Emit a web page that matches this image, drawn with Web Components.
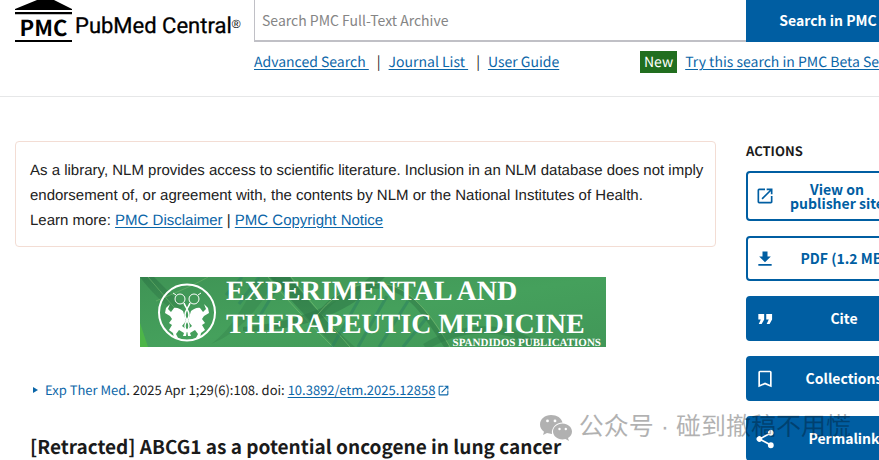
<!DOCTYPE html>
<html lang="en">
<head>
<meta charset="utf-8">
<title>PMC</title>
<style>
  html, body { margin: 0; overflow: hidden; }
  body {
    min-height: 100vh;
    position: relative;
    background: #fff;
    color: #1b1b1b;
    font: 14px/20px "Noto Sans CJK SC", "Noto Sans", sans-serif;
    text-rendering: geometricPrecision;
  }
</style>
</head>
<body>
<pmc-page>
  <pmc-header slot="header"></pmc-header>
  <pmc-disclaimer></pmc-disclaimer>
  <pmc-article>[Retracted] ABCG1 as a potential oncogene in lung cancer</pmc-article>
  <pmc-actions slot="aside">
    <pmc-action icon="open" multiline>View on<br>publisher site</pmc-action>
    <pmc-action icon="download">PDF (1.2 MB)</pmc-action>
    <pmc-action icon="quote" filled>Cite</pmc-action>
    <pmc-action icon="bookmark" filled>Collections</pmc-action>
    <pmc-action icon="share" filled>Permalink</pmc-action>
  </pmc-actions>
</pmc-page>
<page-watermark>公众号 · 碰到撤稿不用慌</page-watermark>

<script>
const ICONS = {
  open: '<path d="M19 19H5V5h7V3H5a2 2 0 0 0-2 2v14a2 2 0 0 0 2 2h14c1.100 0 2-.900 2-2v-7h-2v7zM14 3v2h3.590l-9.830 9.830 1.410 1.410L19 6.410V10h2V3h-7z"/>',
  download: '<path d="M19 9h-4V3H9v6H5l7 7 7-7zM4 18v2h16v-2H4z"/>',
  quote: '<path d="M4 6h7v6.500L8 18H4.500l2.500-5.500H4zM13.500 6h7v6.500l-3 5.500H14l2.500-5.500h-3z"/>',
  bookmark: '<path d="M18 2H6a2 2 0 0 0-2 2v18l8-3.500 8 3.500V4a2 2 0 0 0-2-2zm0 17-6-2.700L6 19V4h12v15z"/>',
  share: '<path d="M19 16c-.900 0-1.700.300-2.300.800L8.600 12.700a3.300 3.300 0 0 0 0-1.400l8-4.200A3.500 3.500 0 1 0 15.500 4.500c0 .300 0 .600.100.900L7.700 9.600a3.400 3.400 0 1 0 0 4.800l7.900 4.200c-.100.300-.100.600-.100.900a3.500 3.500 0 1 0 3.500-3.500z"/>'
};

class PmcPage extends HTMLElement {
  constructor() {
    super();
    this.attachShadow({ mode: "open" }).innerHTML = `
      <style>
        /* the shell runs a little wider than the viewport and is cut on the right */
        :host { display: block; width: calc(100% + 46px); }
        .columns {
          display: grid;
          grid-template-columns: minmax(0, 1fr) 164px;
          gap: 30px;
          padding: 44px 15px 0;
        }
      </style>
      <slot name="header"></slot>
      <div class="columns">
        <main><slot></slot></main>
        <aside><slot name="aside"></slot></aside>
      </div>`;
  }
}

class PmcLogo extends HTMLElement {
  constructor() {
    super();
    this.attachShadow({ mode: "open" }).innerHTML = `
      <style>
        :host { display: block; }
        a { display: flex; gap: 3px; color: #000; text-decoration: none; }
        .mark { width: 57px; text-align: center; font-size: 22px; font-weight: 700; line-height: 25px; }
        svg { display: block; }
        .bar { height: 2px; background: #000; }
        .name { font: 400 22px/24px Roboto, sans-serif; padding-top: 15px; white-space: nowrap; }
        .name span { -webkit-text-stroke: .3px #000; }
        sup { font: 12px/1 "Liberation Sans", sans-serif; line-height: 0; vertical-align: 5px; }
      </style>
      <a href="#">
        <div class="mark">
          <svg width="57" height="15" viewBox="0 0 57 15"><path d="M22 0h17L57 9v1H0V9zM0 12h57v2.200H0z"/></svg>
          PMC
          <div class="bar"></div>
        </div>
        <div class="name"><span>PubMed Central</span><sup>®</sup></div>
      </a>`;
  }
}

class PmcHeader extends HTMLElement {
  constructor() {
    super();
    this.attachShadow({ mode: "open" }).innerHTML = `
      <style>
        :host { display: block; border-bottom: 1px solid #e6e7e8; }
        .bar {
          display: grid;
          grid-template-columns: 224px minmax(0, 1fr);
          gap: 15px;
          padding: 0 15px 23px;
        }
        form { display: flex; height: 42px; }
        input {
          flex: 1;
          min-width: 0;
          box-sizing: border-box;
          border: solid #c0c0c6;
          border-width: 0 0 2px 1px;
          padding: 0 7px;
          font: inherit;
          outline: 0;
        }
        input::placeholder { color: #858585; opacity: 1; }
        form button {
          width: 164px;
          border: 0;
          padding: 0 0 2px;
          background: #005ea2;
          color: #fff;
          font: inherit;
          font-weight: 700;
        }
        .links { display: flex; justify-content: space-between; padding-top: 9px; line-height: 22px; white-space: nowrap; }
        a { color: #0b66a8; text-underline-offset: 2px; text-decoration-thickness: 1px; }
        nav { display: flex; }
        nav a { white-space: pre; }
        .sep { padding: 0 8px; }
        .beta { display: flex; gap: 8px; width: 270px; }
        .new { background: #216e1f; color: #fff; padding: 0 4px; }
      </style>
      <header class="bar">
        <pmc-logo></pmc-logo>
        <div>
          <form role="search">
            <input type="search" placeholder="Search PMC Full-Text Archive" aria-label="Search PMC Full-Text Archive">
            <button type="button">Search in PMC</button>
          </form>
          <div class="links">
            <nav><a href="#">Advanced Search </a><span class="sep">|</span><a href="#">Journal List </a><span class="sep">|</span><a href="#">User Guide</a></nav>
            <div class="beta"><span class="new">New</span><a href="#">Try this search in PMC Beta Search</a></div>
          </div>
        </div>
      </header>`;
  }
}

class PmcDisclaimer extends HTMLElement {
  constructor() {
    super();
    this.attachShadow({ mode: "open" }).innerHTML = `
      <style>
        :host {
          display: block;
          border: 1px solid #f3ddd4;
          border-radius: 4px;
          padding: 16px 0 13px 14px;
          font: 15px/25px "Liberation Sans", Arial, sans-serif;
          color: #212121;
        }
        a { color: #0b66a8; text-underline-offset: 2px; }
      </style>
      As a library, NLM provides access to scientific literature. Inclusion in an NLM database does not imply endorsement of, or agreement with, the contents by NLM or the National Institutes of Health.<br>
      Learn more: <a href="#">PMC Disclaimer</a> | <a href="#">PMC Copyright Notice</a>`;
  }
}

class JournalBanner extends HTMLElement {
  constructor() {
    super();
    this.attachShadow({ mode: "open" }).innerHTML = `
      <style>
        :host { display: block; }
        svg { display: block; margin: 0 auto; }
        text { fill: #fff; font-family: "Liberation Serif", "Times New Roman", serif; font-weight: 700; }
        .title { font-size: 28px; }
        .publisher { font-size: 11px; }
      </style>
      <svg width="466" height="70" viewBox="0 0 466 70" role="img">
        <defs>
          <linearGradient id="base" x1="0" y1="0" x2="1" y2="1">
            <stop offset="0" stop-color="#3f9455"/><stop offset=".5" stop-color="#45a05c"/><stop offset="1" stop-color="#419758"/>
          </linearGradient>
          <linearGradient id="strand" x1="0" y1="0" x2="0" y2="1">
            <stop offset="0" stop-color="#2b7445"/><stop offset="1" stop-color="#3a8b4f"/>
          </linearGradient>
        </defs>
        <rect width="466" height="70" fill="url(#base)"/>
        <path d="M0 46l8 24H0z" fill="#4db548"/>
        <path d="M0 0h14l29 29-6 8C24 27 10 14 0 0z" fill="url(#strand)" opacity=".6"/>
        <path d="M8 0l31 36M16 24C42 13 56 7 68 0" fill="none" stroke="#70b66c" opacity=".6"/>
        <path d="M71 67c15-10 30-31 48-67h18C118 35 96 57 71 67z" fill="#36844d" opacity=".45"/>
        <path d="M130 0c15 16 43 48 65 70h20C190 48 164 20 150 0z" fill="url(#strand)" opacity=".75"/>
        <path d="M128 0c18 22 43 48 65 70M151 0c14 18 35 43 59 70" fill="none" stroke="#71b96d" opacity=".7"/>
        <path d="M103 50c46-4 91-18 127-50h15c-35 36-83 55-142 54z" fill="#2d7847" opacity=".55"/>
        <path d="M173 45c20-27 36-35 64-36 29 0 46 23 70 61" fill="none" stroke="#338049" stroke-width="5" opacity=".65"/>
        <path d="M175 41c20-26 41-36 63-35 27 1 49 24 72 64" fill="none" stroke="#75b76e" opacity=".7"/>
        <path d="M86 18l16-18M99 27l20-27M118 42l23-38M218 70l29-51M239 70l29-46M263 70l25-31M192 70l33-58" stroke="#2b8060" stroke-width="3" opacity=".5"/>
        <path d="M285 70c32-20 75-24 108-4" fill="none" stroke="#2d7948" stroke-width="7" opacity=".45"/>
        <g fill="none" stroke="#fff" stroke-width="1.500">
          <circle cx="47" cy="35.500" r="28" stroke-width="2"/>
          <g stroke-width="1"><circle cx="40" cy="22" r="5"/><circle cx="54" cy="22" r="5"/></g>
          <path d="M44 26c1 4 5 7 5 12s-4 6-4 11 2 4 3 6M50 26c-1 4-5 7-5 12s4 6 4 11-2 4-3 6"/>
          <path d="M36 18l-3-2M58 18l3-2" stroke-width="1"/>
        </g>
        <g fill="#fff">
          <path d="M43 34c-3-2-6-4-9-3l-3 4-3-3 2-5-4 4-1 5 5 3 2 3-3 4 3 2-3 5 4 3 1 5h4l-2-4 3-4 5 3-1 3h3l1-6-5-4 4-5z"/>
          <path d="M51 34c3-2 6-4 9-3l3 4 3-3-2-5 4 4 1 5-5 3-2 3 3 4-3 2 3 5-4 3-1 5h-4l2-4-3-4-5 3 1 3h-3l-1-6 5-4-4-5z"/>
        </g>
        <text class="title" x="86" y="23">EXPERIMENTAL AND</text>
        <text class="title" x="86" y="56">THERAPEUTIC MEDICINE</text>
        <text class="publisher" x="461" y="69" text-anchor="end">SPANDIDOS PUBLICATIONS</text>
      </svg>`;
  }
}

class PmcArticle extends HTMLElement {
  constructor() {
    super();
    this.attachShadow({ mode: "open" }).innerHTML = `
      <style>
        :host { display: block; padding: 30px 0 0 15px; }
        .cite { display: flex; align-items: center; margin-top: 33px; font-size: 13px; white-space: pre; }
        .arrow { width: 15px; }
        .journal { text-decoration: none; }
        a { color: #0b66a8; text-underline-offset: 2px; text-decoration-thickness: 1px; }
        svg { display: block; fill: #0b66a8; }
        .ext { margin-left: 2px; }
        h1 { margin: 33px 0 0; font-size: 19px; line-height: 28px; font-weight: 700; }
      </style>
      <journal-banner></journal-banner>
      <div class="cite"><span class="arrow"><svg width="10" height="8" viewBox="0 0 10 8"><path d="M3 1l5 3-5 3z"/></svg></span><a class="journal" href="#">Exp Ther Med</a>. 2025 Apr 1;29(6):108. doi: <a href="#">10.3892/etm.2025.12858</a><svg class="ext" width="13" height="13" viewBox="0 0 24 24">${ICONS.open}</svg></div>
      <h1><slot></slot></h1>`;
  }
}

class PmcActions extends HTMLElement {
  constructor() {
    super();
    this.attachShadow({ mode: "open" }).innerHTML = `
      <style>
        :host { display: block; }
        h2 { margin: 0 0 10px; font-size: 13px; line-height: 20px; font-weight: 700; }
        .list { display: flex; flex-direction: column; gap: 15px; }
      </style>
      <h2>ACTIONS</h2>
      <div class="list"><slot></slot></div>`;
  }
}

class PmcAction extends HTMLElement {
  constructor() {
    super();
    const icon = ICONS[this.getAttribute("icon")] || "";
    this.attachShadow({ mode: "open" }).innerHTML = `
      <style>
        :host { display: block; }
        button {
          display: flex;
          align-items: center;
          width: 100%;
          min-height: 45px;
          box-sizing: border-box;
          border: 2px solid #005ea2;
          border-radius: 4px;
          padding: 0 4px 0 7px;
          background: #fff;
          color: #005ea2;
          font: inherit;
          font-weight: 700;
          line-height: 14px;
          white-space: nowrap;
        }
        :host([filled]) button { background: #005ea2; color: #fff; }
        :host([multiline]) button { min-height: 50px; padding-right: 18px; }
        svg { flex: none; width: 20px; height: 20px; margin-right: 9px; fill: currentColor; }
        span { flex: 1; text-align: center; padding-bottom: 1px; }
      </style>
      <button type="button"><svg viewBox="0 0 24 24" aria-hidden="true">${icon}</svg><span><slot></slot></span></button>`;
  }
}

class PageWatermark extends HTMLElement {
  constructor() {
    super();
    this.attachShadow({ mode: "open" }).innerHTML = `
      <style>
        :host {
          position: absolute;
          right: 28px;
          bottom: 17px;
          display: flex;
          align-items: center;
          gap: 7px;
          font: 400 25px/34px "Liberation Sans", "Noto Sans CJK SC", sans-serif;
          white-space: pre;
          color: #000;
          opacity: .3;
          pointer-events: none;
        }
        svg { display: block; }
      </style>
      <svg width="32" height="27" viewBox="0 0 32 27" fill="currentColor" fill-rule="evenodd">
        <path d="M11 1C5 1 0 5 0 10.500c0 3 1.500 5.500 4 7.300L3 21l4-2 5 1c-1-6 4-11.500 10.500-11.500C21.500 4 17 1 11 1zM7.500 5.500a1.400 1.400 0 1 1 0 2.800 1.400 1.400 0 0 1 0-2.800zm7.500 0a1.400 1.400 0 1 1 0 2.800 1.400 1.400 0 0 1 0-2.800z"/>
        <path d="M22.500 9.500c-5.300 0-9.500 3.700-9.500 8s4.200 8 9.500 8l3-.500 3.500 2-1-3c2.500-1.500 4-3.800 4-6.500 0-4.300-4.200-8-9.500-8zm-3 4.300a1.200 1.200 0 1 1 0 2.400 1.200 1.200 0 0 1 0-2.400zm6.300 0a1.200 1.200 0 1 1 0 2.400 1.200 1.200 0 0 1 0-2.400z"/>
      </svg>
      <slot></slot>`;
  }
}

customElements.define("pmc-logo", PmcLogo);
customElements.define("pmc-header", PmcHeader);
customElements.define("pmc-disclaimer", PmcDisclaimer);
customElements.define("journal-banner", JournalBanner);
customElements.define("pmc-article", PmcArticle);
customElements.define("pmc-actions", PmcActions);
customElements.define("pmc-action", PmcAction);
customElements.define("pmc-page", PmcPage);
customElements.define("page-watermark", PageWatermark);
</script>
</body>
</html>
